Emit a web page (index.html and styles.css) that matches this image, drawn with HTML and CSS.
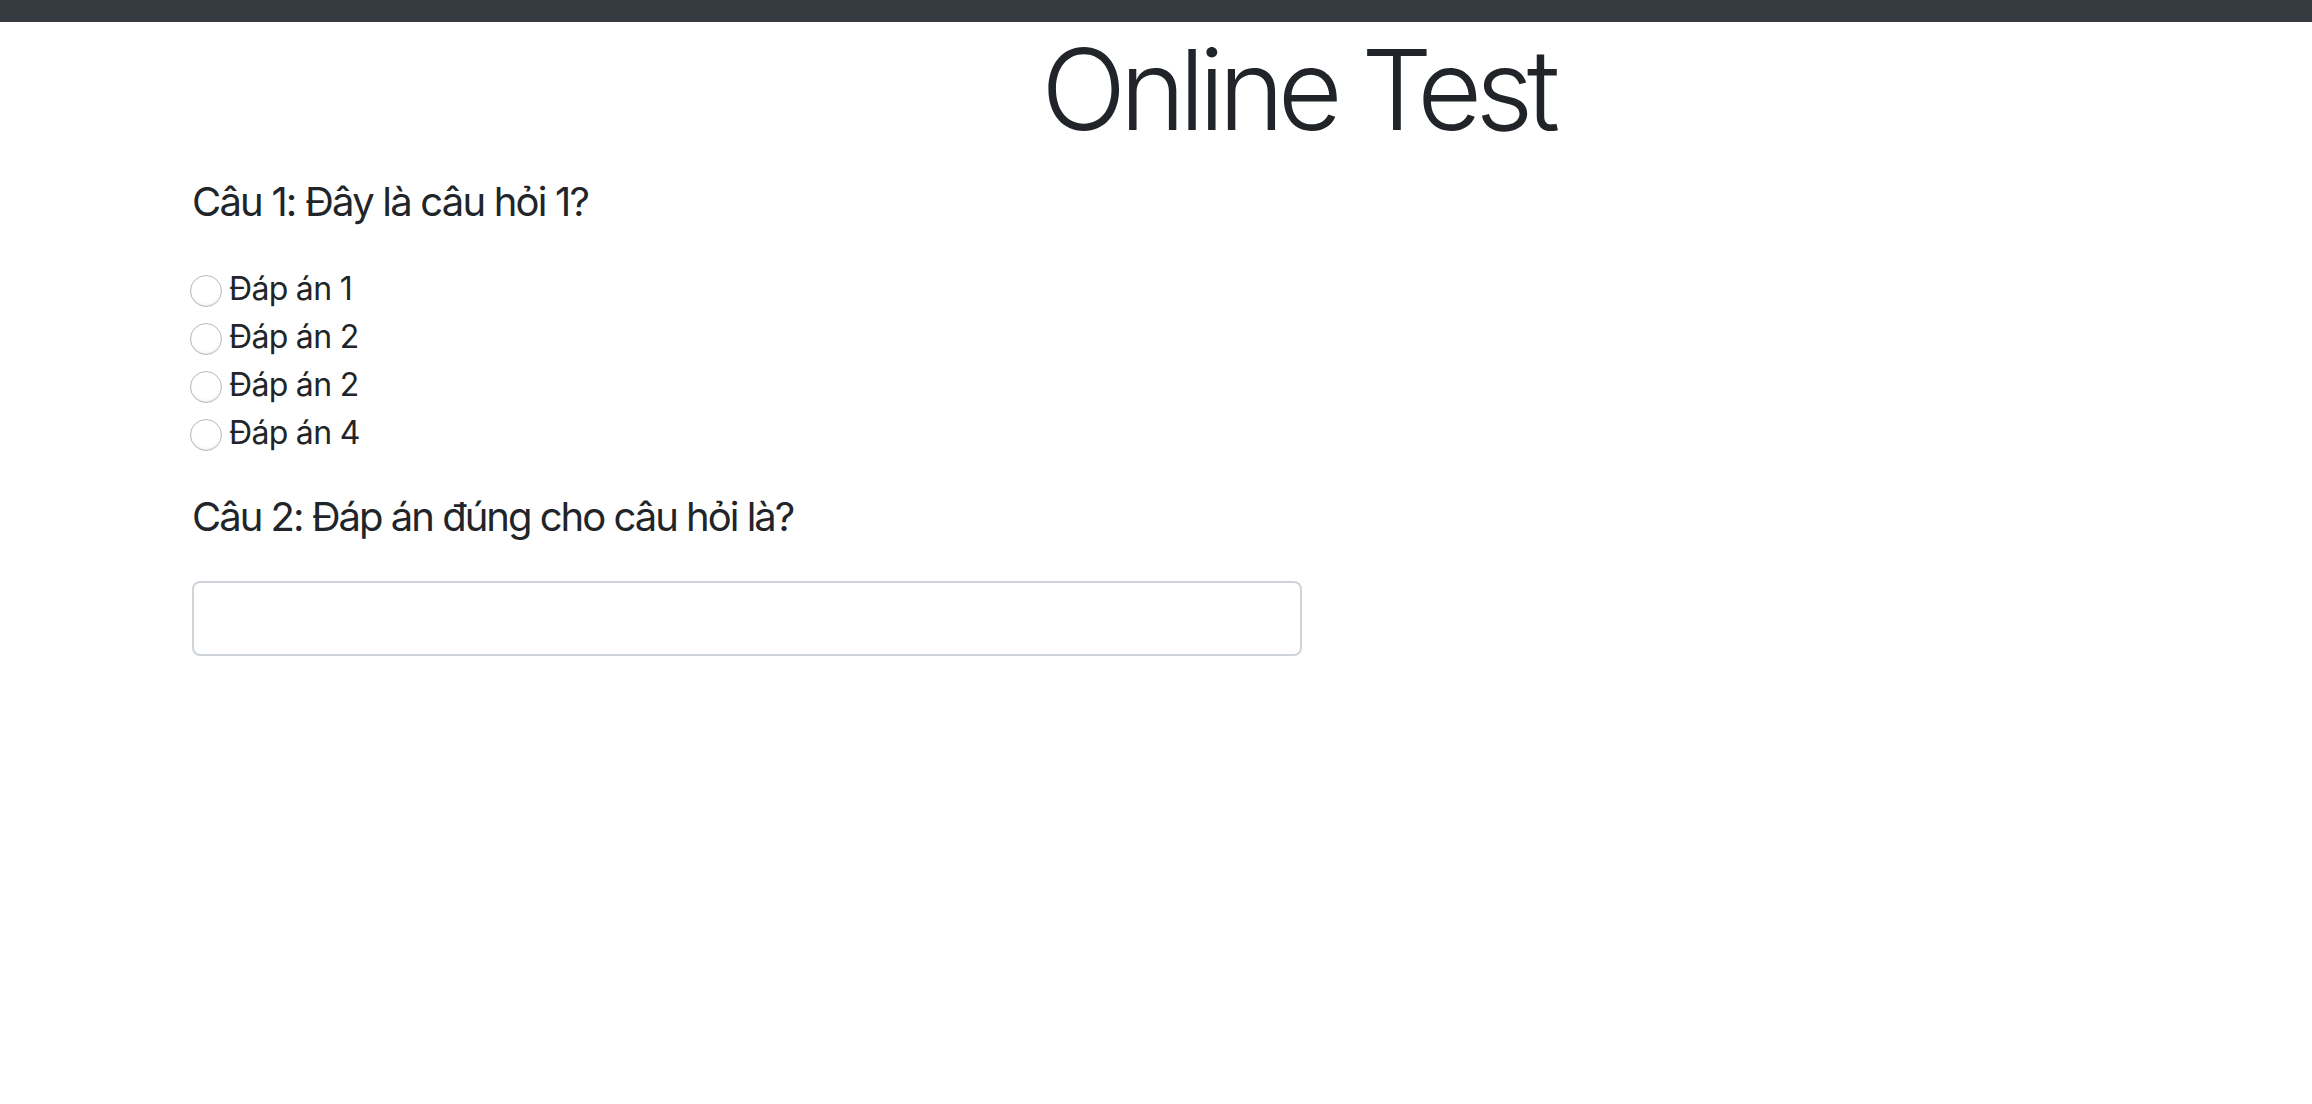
FILE: index.html
```html
<!DOCTYPE html>
<html lang="vi">
<head>
<meta charset="utf-8">
<title>Online Test</title>
<link rel="stylesheet" href="styles.css">
</head>
<body>
<div class="topbar"></div>
<h1 class="title">Online Test</h1>
<main class="content">
  <section class="question">
    <h5 class="q-title">Câu 1: Đây là câu hỏi 1?</h5>
    <div class="options">
      <label class="option"><input type="radio" name="q1" class="radio"><span>Đáp án 1</span></label>
      <label class="option"><input type="radio" name="q1" class="radio"><span>Đáp án 2</span></label>
      <label class="option"><input type="radio" name="q1" class="radio"><span>Đáp án 2</span></label>
      <label class="option"><input type="radio" name="q1" class="radio"><span>Đáp án 4</span></label>
    </div>
  </section>
  <section class="question">
    <h5 class="q-title q2">Câu 2: Đáp án đúng cho câu hỏi là?</h5>
    <input type="text" class="answer">
  </section>
</main>
</body>
</html>
```

FILE: styles.css
```css
* { box-sizing: border-box; }
html, body {
  margin: 0;
  padding: 0;
  background: #fff;
}
body {
  font-family: Inter, "Noto Sans", "Liberation Sans", sans-serif;
  color: #212529;
  font-size: 32px;
  line-height: 48px;
}
.topbar {
  height: 22px;
  background: #343a40;
}
.title {
  margin: 0;
  font-size: 112px;
  font-weight: 300;
  line-height: 134px;
  text-align: center;
  padding-left: 283px;
  letter-spacing: -6.5px;
}
.content {
  padding-left: 192px;
  display: flex;
  flex-direction: column;
}
.q-title {
  margin: 22px 0 0 0;
  font-size: 40px;
  font-weight: 400;
  line-height: 48px;
  letter-spacing: -1.8px;
}
.q-title.q2 {
  margin-top: 36px;
  letter-spacing: -2px;
}
.options {
  margin-top: 39px;
  display: flex;
  flex-direction: column;
}
.option {
  display: flex;
  align-items: center;
  height: 48px;
  gap: 7px;
  letter-spacing: -0.7px;
}
.radio {
  appearance: none;
  -webkit-appearance: none;
  width: 32px;
  height: 32px;
  margin: 4px 0 0 -2px;
  border-radius: 50%;
  border: 1.5px solid #b9b9b9;
  background: radial-gradient(circle at 50% 40%, #ffffff 55%, #f1f1f1 100%);
  box-shadow: inset 0 -1px 1px rgba(0,0,0,0.06);
  flex: none;
}
.answer {
  display: block;
  margin-top: 40px;
  width: 1110px;
  height: 75px;
  border: 2px solid #ced4da;
  border-radius: 8px;
  background: #fff;
  font-family: inherit;
  font-size: 32px;
  padding: 12px 24px;
  outline: none;
}
```
